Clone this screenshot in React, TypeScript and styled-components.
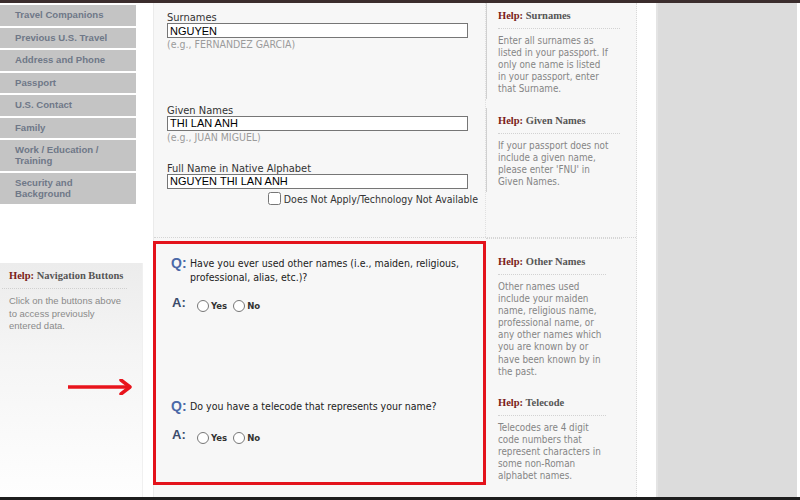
import React from 'react';
import styled, { createGlobalStyle } from 'styled-components';

const GlobalStyle = createGlobalStyle`
  html, body {
    margin: 0;
    padding: 0;
    background: #fff;
  }
  body {
    width: 800px;
    height: 500px;
    overflow: hidden;
    font-family: "DejaVu Sans Condensed", "DejaVu Sans", sans-serif;
  }
  * { box-sizing: border-box; }
`;

const Frame = styled.div`
  width: 800px;
  height: 500px;
  display: flex;
  flex-direction: column;
`;

const EdgeBar = styled.div<{ $color: string }>`
  flex: none;
  height: 3px;
  background: ${(p) => p.$color};
`;

const Body = styled.div`
  flex: 1;
  min-height: 0;
  display: flex;
`;

// Left navigation
const Sidebar = styled.aside`
  width: 153px;
  flex: none;
  padding-top: 2px;
  display: flex;
  flex-direction: column;
`;

const NavList = styled.ul`
  list-style: none;
  margin: 0;
  padding: 0;
  width: 136px;
  display: flex;
  flex-direction: column;
  gap: 2px;
`;

const NavButton = styled.li`
  background: #c4c4c4;
  color: #6f7888;
  font: bold 9.6px/10.5px "Liberation Sans", Arial, sans-serif;
  padding: 5px 8px 5px 15px;
`;

const NavHelp = styled.div`
  margin-top: 59px;
  width: 142px;
  flex: 1;
  background: linear-gradient(to bottom, #ececec 0%, #f5f5f5 40%, #fefefe 100%);
  box-shadow: 1px 0 0 #f0f0f0;
`;

const NavHelpTitle = styled.div`
  font: bold 10.5px/13px "Liberation Serif", "Times New Roman", serif;
  color: #555;
  padding: 5.5px 0 6.5px 7px;
  margin: 0 15px 0 2px;
  border-bottom: 1px dotted #cfcfcf;

  span { color: #7b1c17; }
`;

const NavHelpText = styled.p`
  margin: 6px 0 0;
  padding-left: 9px;
  font: 9.5px/12.5px "Liberation Sans", Arial, sans-serif;
  color: #8a8a8a;
`;

const Arrow = styled.svg`
  display: block;
  margin: 46px 0 0 67px;
`;

// Main form panel
const MainPanel = styled.main`
  width: 484px;
  flex: none;
  background: #f7f7f7;
  border-left: 1px solid #ebebeb;
  border-right: 1px dotted #d9d9d9;
`;

const Section = styled.section<{ $h: number; $divider?: boolean }>`
  display: grid;
  grid-template-columns: 332px 1fr;
  height: ${(p) => p.$h}px;
  border-bottom: ${(p) => (p.$divider ? '1px dotted #d5d5d5' : 'none')};
`;

const FormCell = styled.div<{ $top: number }>`
  padding: ${(p) => p.$top}px 7px 0 13px;
  border-right: 1px dotted #e0e0e0;
`;

const FieldLabel = styled.label<{ $top?: number }>`
  display: block;
  margin-top: ${(p) => p.$top ?? 0}px;
  font-size: 11px;
  line-height: 11px;
  color: #333;
`;

const TextBox = styled.input`
  display: block;
  width: 301px;
  height: 15px;
  margin: 0;
  padding: 0 2px;
  border: 1px solid #767676;
  border-radius: 0;
  background: #fff;
  font: 11px/13px "Liberation Sans", Arial, sans-serif;
  color: #000;
  outline: none;
`;

const Hint = styled.div`
  font-size: 10.5px;
  line-height: 13px;
  color: #9b9b9b;
`;

const CheckRow = styled.label`
  display: flex;
  justify-content: flex-end;
  align-items: center;
  gap: 3px;
  margin-top: 4px;
  height: 12px;
  font-size: 10.5px;
  color: #333;

  input {
    margin: 0;
    width: 13px;
    height: 13px;
  }
`;

const HelpColumn = styled.div<{ $rule?: boolean }>`
  border-top: ${(p) => (p.$rule ? '1px dotted #d5d5d5' : 'none')};
  margin-right: ${(p) => (p.$rule ? 14 : 0)}px;
  display: flex;
  flex-direction: column;
`;

const HelpBox = styled.div<{ $top: number; $bordered?: boolean }>`
  margin-top: ${(p) => p.$top}px;
  padding: 6px 0 ${(p) => (p.$bordered ? 4 : 0)}px 11px;
  border-left: 1px solid ${(p) => (p.$bordered ? '#d0d0d0' : 'transparent')};
`;

const HelpTitle = styled.div`
  font: bold 10.5px/13px "Liberation Serif", "Times New Roman", serif;
  color: #555;
  padding-bottom: 6px;
  margin-right: 16px;
  border-bottom: 1px dotted #d2d2d2;

  span { color: #7b1c17; }
`;

const HelpText = styled.p`
  margin: 6px 0 0;
  font-size: 9.8px;
  line-height: 12.1px;
  color: #858585;
  white-space: nowrap;
`;

// Question block (highlighted in red)
const RedBox = styled.div`
  margin: 3px 0 0 -1px;
  width: 333px;
  height: 244px;
  border: 3px solid #e3121b;
  padding-left: 15px;
`;

const QBlock = styled.div<{ $top: number }>`
  margin-top: ${(p) => p.$top}px;
`;

const QRow = styled.div`
  display: flex;
  align-items: flex-start;
`;

const QMark = styled.span`
  flex: none;
  width: 19px;
  font: bold 14px/14px "Liberation Sans", Arial, sans-serif;
  color: #4a69a8;
`;

const QText = styled.div`
  font-size: 10.5px;
  line-height: 14px;
  color: #222;
`;

const ARow = styled.div<{ $gap: number }>`
  display: flex;
  align-items: center;
  margin-top: ${(p) => p.$gap}px;
  height: 14px;
`;

const AMark = styled.span`
  flex: none;
  width: 26px;
  padding-left: 1px;
  font: bold 13px/14px "Liberation Sans", Arial, sans-serif;
  color: #3b4b6b;
`;

const RadioOption = styled.label`
  display: flex;
  align-items: center;
  gap: 2px;
  margin: 5px 6px 0 0;
  font-weight: bold;
  font-size: 9.5px;
  color: #333;

  input {
    margin: 0;
    width: 12px;
    height: 12px;
  }
`;

const Gutter = styled.div`
  width: 19px;
  flex: none;
  background: #fff;
`;

const GrayPanel = styled.div`
  width: 141px;
  flex: none;
  background: #dcdcdc;
  border-left: 2px solid #e4e4e4;
`;

const navItems = [
  'Travel Companions',
  'Previous U.S. Travel',
  'Address and Phone',
  'Passport',
  'U.S. Contact',
  'Family',
  'Work / Education / Training',
  'Security and Background',
];

const YesNo: React.FC<{ name: string }> = ({ name }) => (
  <>
    <RadioOption>
      <input type="radio" name={name} />
      Yes
    </RadioOption>
    <RadioOption>
      <input type="radio" name={name} />
      No
    </RadioOption>
  </>
);

const App: React.FC = () => {
  return (
    <Frame>
      <GlobalStyle />
      <EdgeBar $color="#3b2d2d" />
      <Body>
        <Sidebar>
          <NavList>
            {navItems.map((item) => (
              <NavButton key={item}>{item}</NavButton>
            ))}
          </NavList>
          <NavHelp>
            <NavHelpTitle>
              <span>Help:</span> Navigation Buttons
            </NavHelpTitle>
            <NavHelpText>
              Click on the buttons above
              <br />
              to access previously
              <br />
              entered data.
            </NavHelpText>
            <Arrow width="66" height="16" viewBox="0 0 66 16">
              <path d="M1 8 H63" stroke="#e8141c" strokeWidth="3.5" fill="none" />
              <path d="M54 1 L63 8 L54 15" stroke="#e8141c" strokeWidth="3.5" fill="none" strokeLinecap="round" strokeLinejoin="round" />
            </Arrow>
          </NavHelp>
        </Sidebar>

        <MainPanel>
          <Section $h={97}>
            <FormCell $top={9}>
              <FieldLabel>Surnames</FieldLabel>
              <TextBox defaultValue="NGUYEN" />
              <Hint>(e.g., FERNANDEZ GARCIA)</Hint>
            </FormCell>
            <HelpColumn>
              <HelpBox $top={0} $bordered>
                <HelpTitle>
                  <span>Help:</span> Surnames
                </HelpTitle>
                <HelpText>
                  Enter all surnames as
                  <br />
                  listed in your passport. If
                  <br />
                  only one name is listed
                  <br />
                  in your passport, enter
                  <br />
                  that Surname.
                </HelpText>
              </HelpBox>
            </HelpColumn>
          </Section>

          <Section $h={138} $divider>
            <FormCell $top={4.5}>
              <FieldLabel>Given Names</FieldLabel>
              <TextBox defaultValue="THI LAN ANH" />
              <Hint>(e.g., JUAN MIGUEL)</Hint>
              <FieldLabel $top={19}>Full Name in Native Alphabet</FieldLabel>
              <TextBox defaultValue="NGUYEN THI LAN ANH" />
              <CheckRow>
                <input type="checkbox" />
                Does Not Apply/Technology Not Available
              </CheckRow>
            </FormCell>
            <HelpColumn>
              <HelpBox $top={8} $bordered>
                <HelpTitle>
                  <span>Help:</span> Given Names
                </HelpTitle>
                <HelpText>
                  If your passport does not
                  <br />
                  include a given name,
                  <br />
                  please enter 'FNU' in
                  <br />
                  Given Names.
                </HelpText>
              </HelpBox>
            </HelpColumn>
          </Section>

          <Section $h={247}>
            <RedBox>
              <QBlock $top={12}>
                <QRow>
                  <QMark>Q:</QMark>
                  <QText>
                    Have you ever used other names (i.e., maiden, religious,
                    <br />
                    professional, alias, etc.)?
                  </QText>
                </QRow>
                <ARow $gap={12}>
                  <AMark>A:</AMark>
                  <YesNo name="othernames" />
                </ARow>
              </QBlock>
              <QBlock $top={89}>
                <QRow>
                  <QMark>Q:</QMark>
                  <QText>Do you have a telecode that represents your name?</QText>
                </QRow>
                <ARow $gap={15}>
                  <AMark>A:</AMark>
                  <YesNo name="telecode" />
                </ARow>
              </QBlock>
            </RedBox>
            <HelpColumn $rule>
              <HelpBox $top={10}>
                <HelpTitle>
                  <span>Help:</span> Other Names
                </HelpTitle>
                <HelpText>
                  Other names used
                  <br />
                  include your maiden
                  <br />
                  name, religious name,
                  <br />
                  professional name, or
                  <br />
                  any other names which
                  <br />
                  you are known by or
                  <br />
                  have been known by in
                  <br />
                  the past.
                </HelpText>
              </HelpBox>
              <HelpBox $top={12}>
                <HelpTitle>
                  <span>Help:</span> Telecode
                </HelpTitle>
                <HelpText>
                  Telecodes are 4 digit
                  <br />
                  code numbers that
                  <br />
                  represent characters in
                  <br />
                  some non-Roman
                  <br />
                  alphabet names.
                </HelpText>
              </HelpBox>
            </HelpColumn>
          </Section>
        </MainPanel>

        <Gutter />
        <GrayPanel />
      </Body>
      <EdgeBar $color="#1e1e1e" />
    </Frame>
  );
};

export default App;
